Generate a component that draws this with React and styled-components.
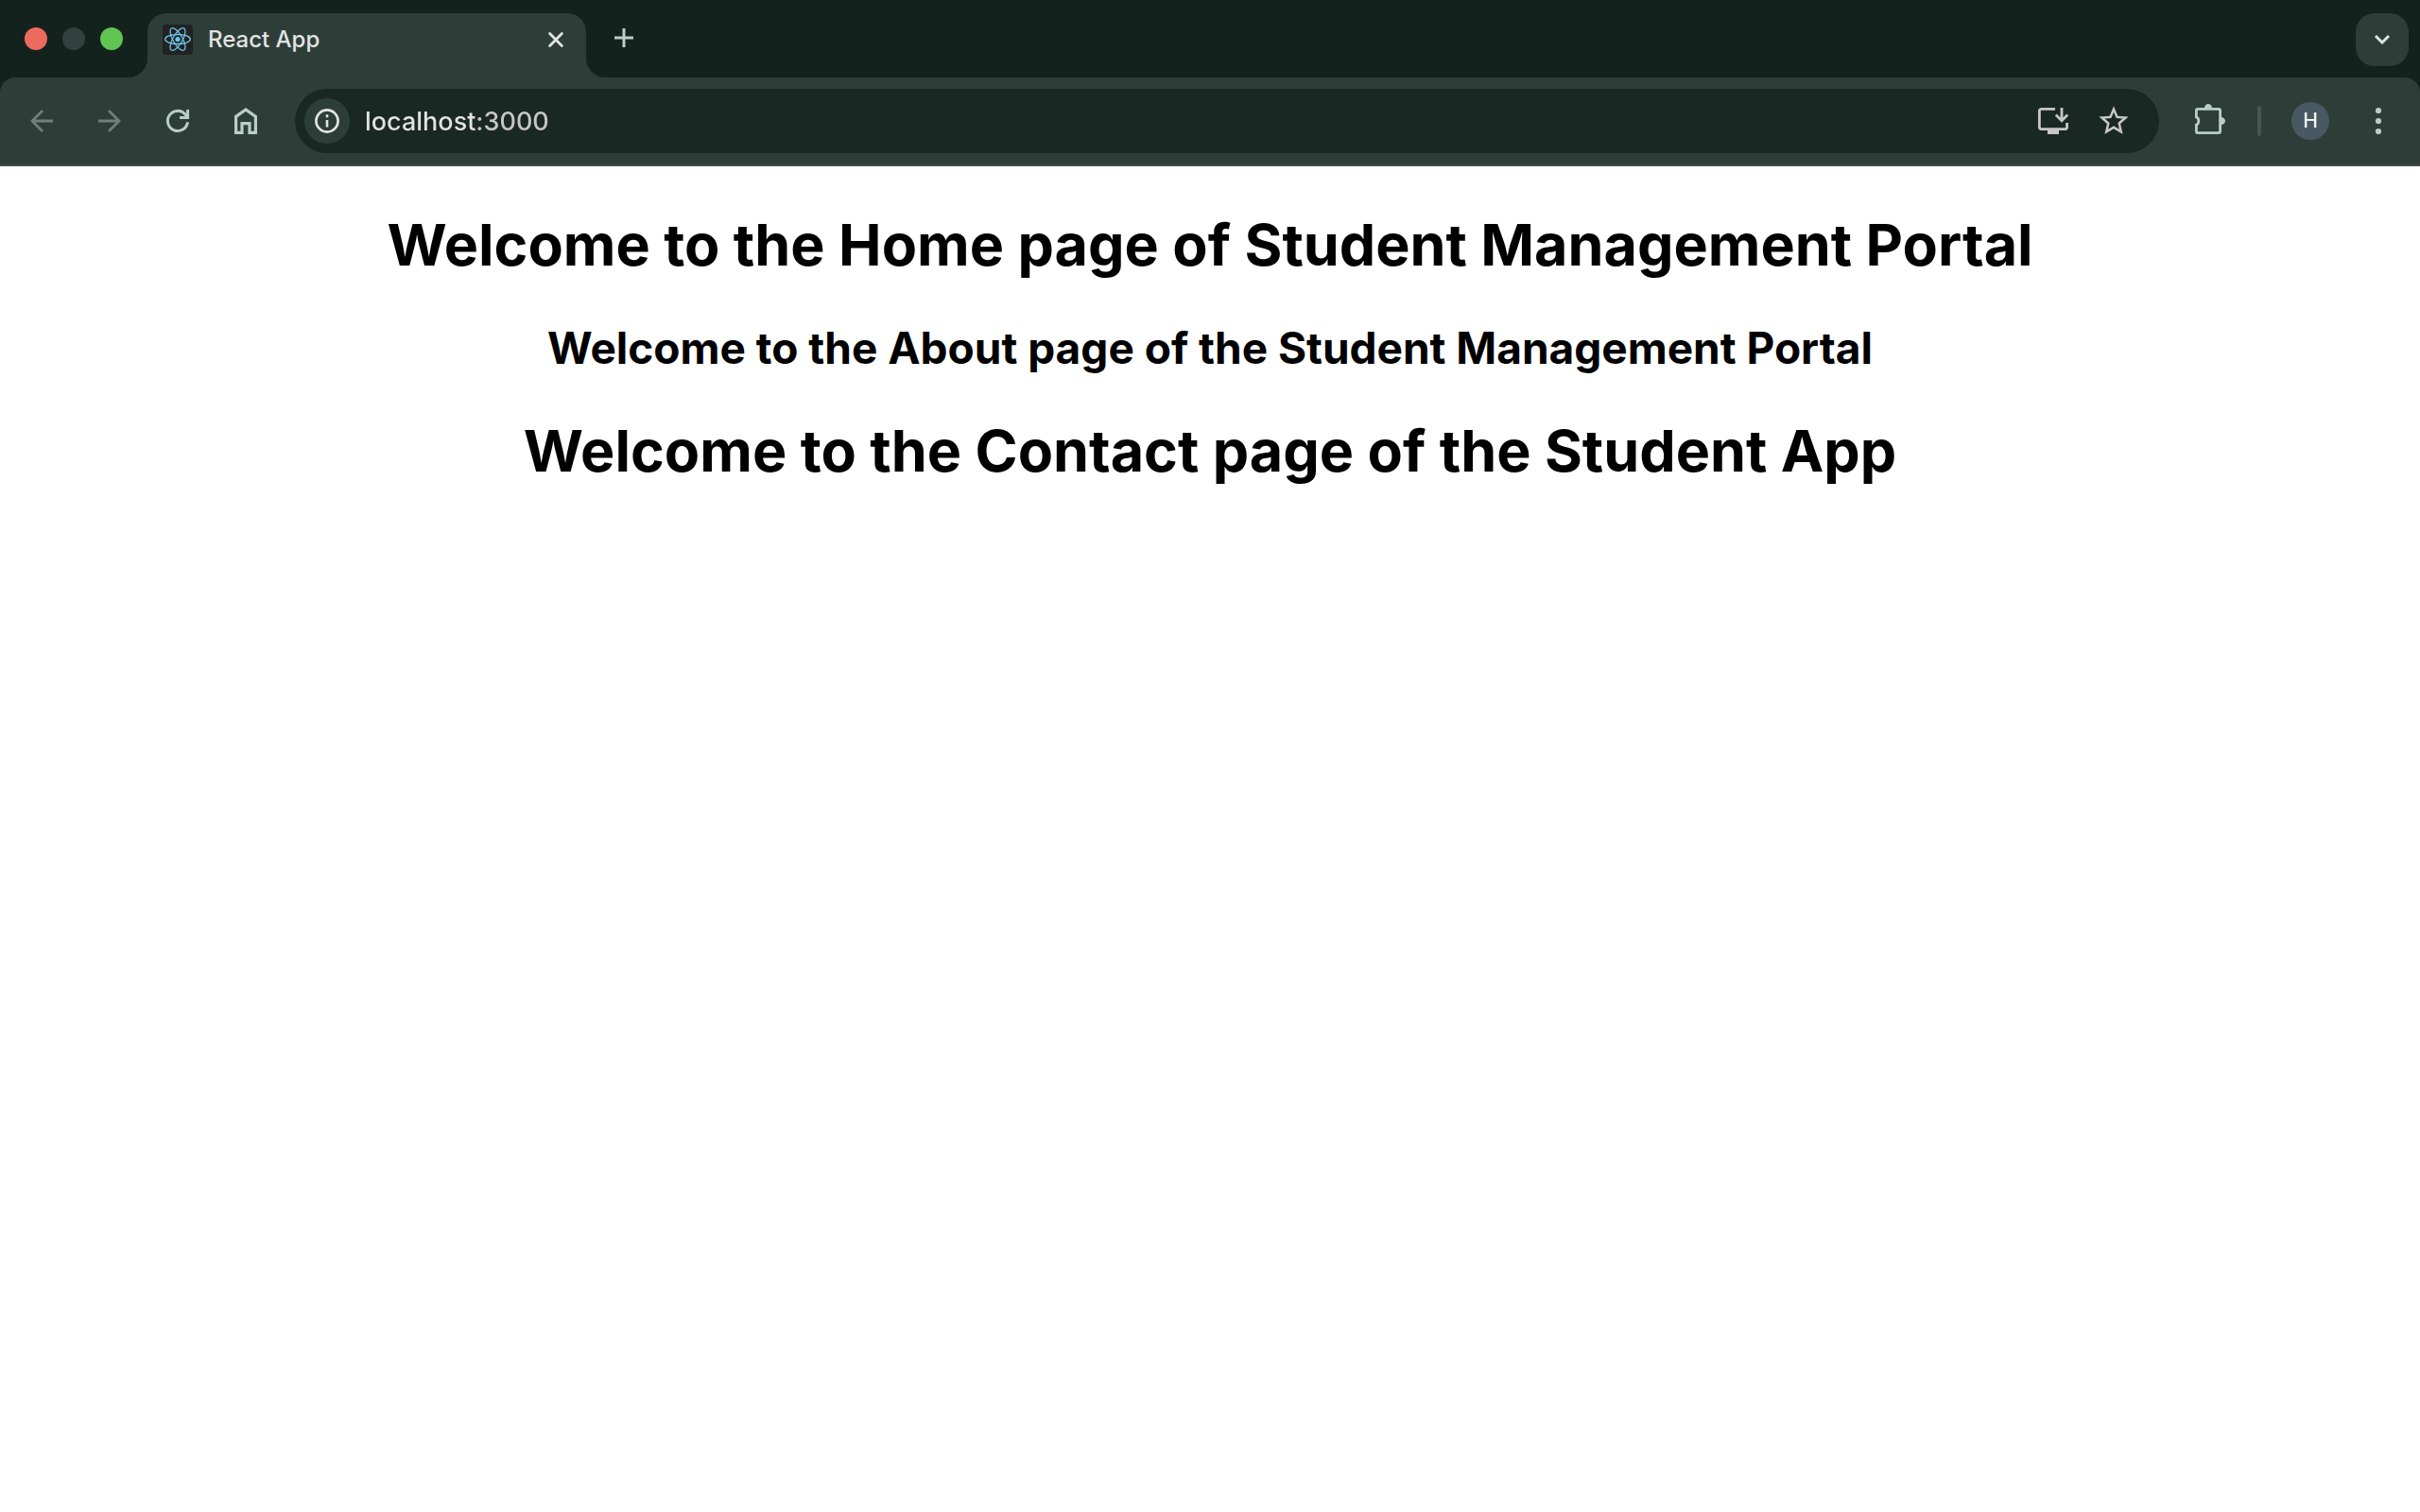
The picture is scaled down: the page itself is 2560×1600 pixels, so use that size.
import React, { useState } from "react";
import styled, { createGlobalStyle } from "styled-components";

const color = {
  frame: "#13221d",
  toolbar: "#2d3e39",
  field: "#1a2823",
  icon: "#b9cec7",
  iconMuted: "#717f7a",
  iconLight: "#c7c7c7",
  text: "#e3e3e3",
};

const GlobalStyle = createGlobalStyle`
  * { box-sizing: border-box; }
  body {
    margin: 0;
    background: #fff;
    font-family: Inter, "Liberation Sans", sans-serif;
  }
`;

const Browser = styled.div`
  min-height: 100vh;
  display: flex;
  flex-direction: column;
`;

const Chrome = styled.header`
  background: ${color.frame};
`;

const TabStrip = styled.div`
  display: flex;
  align-items: flex-start;
  height: 82px;
  padding: 14px 12px 0 26px;
`;

const WindowControls = styled.div`
  display: flex;
  gap: 16px;
  padding: 15px 26px 0 0;
`;

const Light = styled.button`
  width: 24px;
  height: 24px;
  padding: 0;
  border: 0;
  border-radius: 50%;
  background: ${(p) => p.$fill};
`;

const Tab = styled.div`
  position: relative;
  display: flex;
  align-items: center;
  width: 464px;
  height: 68px;
  padding: 0 12px 12px 16px;
  border-radius: 20px 20px 0 0;
  background: ${color.toolbar};

  &::before,
  &::after {
    content: "";
    position: absolute;
    bottom: 0;
    width: 22px;
    height: 22px;
  }
  &::before {
    right: 100%;
    background: radial-gradient(circle at 0 0, transparent 22px, ${color.toolbar} 23px);
  }
  &::after {
    left: 100%;
    background: radial-gradient(circle at 100% 0, transparent 22px, ${color.toolbar} 23px);
  }
`;

const TabTitle = styled.span`
  flex: 1;
  margin-left: 16px;
  color: ${color.text};
  font-size: 24px;
  font-weight: 500;
  line-height: 32px;
`;

const IconButton = styled.button`
  display: flex;
  align-items: center;
  justify-content: center;
  flex: none;
  width: ${(p) => p.$width || 56}px;
  height: ${(p) => p.$height || 56}px;
  padding: 0;
  border: 0;
  border-radius: ${(p) => p.$radius || 0}px;
  background: ${(p) => p.$fill || "transparent"};
  color: ${(p) => p.$color || color.icon};
`;

const Spacer = styled.div`
  flex: 1;
`;

const NewTab = styled.div`
  margin-left: 12px;
`;

const Toolbar = styled.nav`
  display: flex;
  align-items: center;
  gap: 16px;
  height: 94px;
  padding: 0 16px;
  border-bottom: 2px solid #474a49;
  border-radius: 16px 16px 0 0;
  background: ${color.toolbar};
`;

const AddressBar = styled.form`
  display: flex;
  align-items: center;
  flex: 1;
  height: 68px;
  margin: 0 8px;
  padding: 0 16px 0 10px;
  border-radius: 34px;
  background: ${color.field};
`;

/* The host is brighter than the port that follows it. */
const Address = styled.input`
  flex: 1;
  min-width: 0;
  margin-left: 16px;
  padding: 2px 0 0;
  border: 0;
  outline: 0;
  color: transparent;
  background: linear-gradient(90deg, ${color.text} 117px, ${color.iconLight} 117px);
  background-clip: text;
  -webkit-background-clip: text;
  font-family: inherit;
  font-size: 27px;
  font-weight: 500;
  line-height: 36px;
`;

const Divider = styled.span`
  width: 4px;
  height: 32px;
  margin: 0 8px;
  border-radius: 2px;
  background: #465853;
`;

const Avatar = styled.button`
  width: 40px;
  height: 40px;
  margin: 0 8px;
  padding: 0;
  border: 0;
  border-radius: 50%;
  background: #495964;
  color: #fff;
  font-family: Roboto, sans-serif;
  font-size: 22px;
  font-weight: 400;
  line-height: 40px;
  text-align: center;
`;

const Page = styled.main`
  flex: 1;
  padding-top: 45px;
  background: #fff;
  color: #000;
  text-align: center;
`;

const Title = styled.h1`
  margin: 0 0 42px;
  font-size: 61px;
  line-height: 76px;
  font-weight: 700;
`;

const Subtitle = styled.h2`
  margin: 0 0 42px;
  font-size: 46px;
  line-height: 58px;
  font-weight: 700;
`;

const Svg = styled.svg`
  display: block;
  flex: none;
  width: 40px;
  height: 40px;
  fill: none;
  stroke: currentColor;
  stroke-width: ${(p) => p.$stroke || 3};
`;

const Glyph = ({ stroke, children }) => (
  <Svg viewBox="0 0 40 40" $stroke={stroke} aria-hidden="true">
    {children}
  </Svg>
);

const Favicon = styled.svg`
  display: block;
  width: 32px;
  height: 32px;
`;

const ReactLogo = () => (
  <Favicon viewBox="0 0 32 32" aria-hidden="true">
    <rect width="32" height="32" rx="3" fill="#222" />
    <g fill="none" stroke="#6cc4e8" strokeWidth="1.3">
      <ellipse cx="16" cy="15.5" rx="13.3" ry="5" />
      <ellipse cx="16" cy="15.5" rx="13.3" ry="5" transform="rotate(60 16 15.5)" />
      <ellipse cx="16" cy="15.5" rx="13.3" ry="5" transform="rotate(120 16 15.5)" />
    </g>
    <circle cx="16" cy="15.5" r="2.6" fill="#6cc4e8" />
  </Favicon>
);

export default function App() {
  const [url, setUrl] = useState("localhost:3000");

  return (
    <Browser>
      <GlobalStyle />
      <Chrome>
        <TabStrip>
          <WindowControls>
            <Light $fill="#ed6a5e" aria-label="Close window" />
            <Light $fill="#33413e" aria-label="Minimize window" />
            <Light $fill="#61c554" aria-label="Zoom window" />
          </WindowControls>
          <Tab>
            <ReactLogo />
            <TabTitle>React App</TabTitle>
            <IconButton $width={40} $height={40} $color={color.text} aria-label="Close tab">
              <Glyph stroke={2.8}>
                <path d="M13.6 13.6 26.4 26.4M26.4 13.6 13.6 26.4" strokeLinecap="round" />
              </Glyph>
            </IconButton>
          </Tab>
          <NewTab>
            <IconButton $height={52} aria-label="New tab">
              <Glyph stroke={3}>
                <path d="M20 10V30M10 20H30" />
              </Glyph>
            </IconButton>
          </NewTab>
          <Spacer />
          <IconButton $radius={20} $fill={color.toolbar} $color={color.text} aria-label="Search tabs">
            <Glyph stroke={3}>
              <path d="M13 16 20 23 27 16" />
            </Glyph>
          </IconButton>
        </TabStrip>

        <Toolbar>
          <IconButton $color={color.iconMuted} aria-label="Back">
            <Glyph stroke={2.8}>
              <path d="M32 20H9.5M21 9 10 20 21 31" />
            </Glyph>
          </IconButton>
          <IconButton $color={color.iconMuted} aria-label="Forward">
            <Glyph stroke={2.8}>
              <path d="M8 20H30.5M19 9 30 20 19 31" />
            </Glyph>
          </IconButton>
          <IconButton aria-label="Reload">
            <Glyph>
              <path d="M30.5 21.3A10.6 10.6 0 1 1 27.8 12.8L30 15.5M30.6 8V16.5H22" />
            </Glyph>
          </IconButton>
          <IconButton aria-label="Home">
            <Glyph stroke={3.2}>
              <path d="M9.6 15.4 20 7.9 30.4 15.4V32.4H24V22.6H16V32.4H9.6Z" />
            </Glyph>
          </IconButton>

          <AddressBar onSubmit={(e) => e.preventDefault()}>
            <IconButton
              type="button"
              $width={48}
              $height={48}
              $radius={24}
              $fill={color.toolbar}
              $color={color.text}
              aria-label="View site information"
            >
              <Glyph stroke={2.6}>
                <circle cx="20" cy="20" r="11.6" />
                <path d="M20 19V26.5M20 13.3V16.2" />
              </Glyph>
            </IconButton>
            <Address
              aria-label="Address"
              spellCheck={false}
              value={url}
              onChange={(e) => setUrl(e.target.value)}
            />
            <IconButton type="button" $width={64} $color={color.iconLight} aria-label="Install app">
              <Glyph stroke={2.8}>
                <path d="M22 7.4H7.4a2 2 0 0 0-2 2V26.6a2 2 0 0 0 2 2H32.6a2 2 0 0 0 2-2V22M29 6V19M22.8 13.6 29 19.8 35.2 13.6" />
                <rect x="14" y="29" width="12" height="5" fill="currentColor" stroke="none" />
              </Glyph>
            </IconButton>
            <IconButton type="button" $width={64} $color={color.iconLight} aria-label="Bookmark this tab">
              <Glyph>
                <path
                  transform="translate(1.28 1.2) scale(1.56)"
                  fill="currentColor"
                  stroke="none"
                  d="M22 9.24l-7.19-.62L12 2 9.19 8.63 2 9.24l5.46 4.73L5.82 21 12 17.27 18.18 21l-1.63-7.03L22 9.24zM12 15.4l-3.76 2.27 1-4.28-3.32-2.88 4.38-.38L12 6.1l1.71 4.04 4.38.38-3.32 2.88 1 4.28L12 15.4z"
                />
              </Glyph>
            </IconButton>
          </AddressBar>

          <IconButton aria-label="Extensions">
            <Glyph stroke={2.8}>
              <path d="M6 15.3A4.8 4.8 0 0 1 6 24.7M7.4 15.6V8.9Q7.4 7.4 8.9 7.4H31.1Q32.6 7.4 32.6 8.9V31.1Q32.6 32.6 31.1 32.6H8.9Q7.4 32.6 7.4 31.1V24.4" />
              <path d="M16 6.5a4 4.5 0 0 1 8 0zM33.5 16a4.5 4 0 0 1 0 8z" fill="currentColor" stroke="none" />
            </Glyph>
          </IconButton>
          <Divider />
          <Avatar aria-label="Profile">H</Avatar>
          <IconButton aria-label="Browser menu">
            <Glyph>
              <g fill="currentColor" stroke="none">
                <circle cx="20" cy="9" r="3.1" />
                <circle cx="20" cy="20" r="3.1" />
                <circle cx="20" cy="31" r="3.1" />
              </g>
            </Glyph>
          </IconButton>
        </Toolbar>
      </Chrome>

      <Page>
        <Title>Welcome to the Home page of Student Management Portal</Title>
        <Subtitle>Welcome to the About page of the Student Management Portal</Subtitle>
        <Title>Welcome to the Contact page of the Student App</Title>
      </Page>
    </Browser>
  );
}
